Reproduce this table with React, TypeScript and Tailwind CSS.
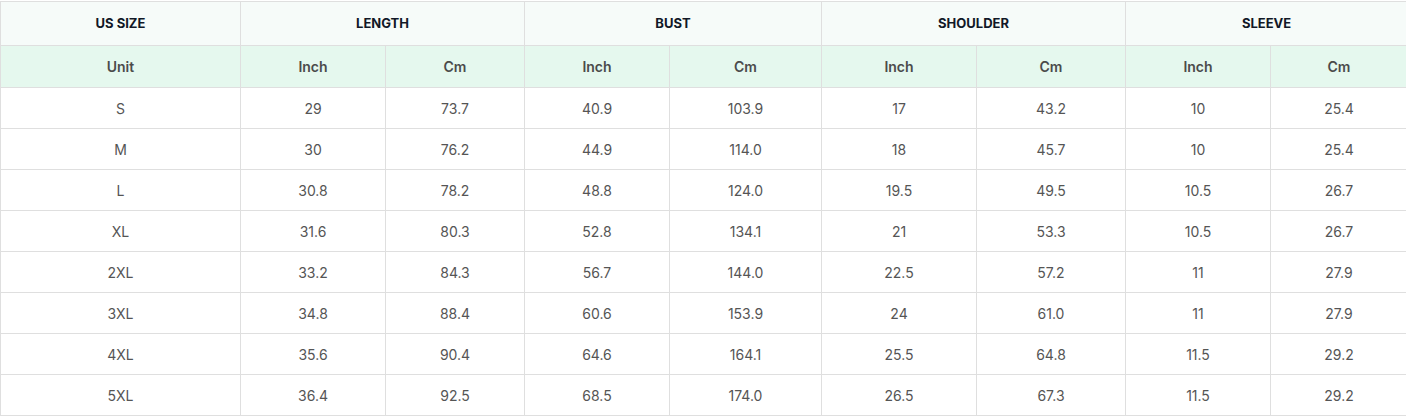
import React from "react";

const rows = [
  ["S", "29", "73.7", "40.9", "103.9", "17", "43.2", "10", "25.4"],
  ["M", "30", "76.2", "44.9", "114.0", "18", "45.7", "10", "25.4"],
  ["L", "30.8", "78.2", "48.8", "124.0", "19.5", "49.5", "10.5", "26.7"],
  ["XL", "31.6", "80.3", "52.8", "134.1", "21", "53.3", "10.5", "26.7"],
  ["2XL", "33.2", "84.3", "56.7", "144.0", "22.5", "57.2", "11", "27.9"],
  ["3XL", "34.8", "88.4", "60.6", "153.9", "24", "61.0", "11", "27.9"],
  ["4XL", "35.6", "90.4", "64.6", "164.1", "25.5", "64.8", "11.5", "29.2"],
  ["5XL", "36.4", "92.5", "68.5", "174.0", "26.5", "67.3", "11.5", "29.2"],
];

const widths = [240, 145, 139, 145, 152, 155, 149, 145, 137];

export default function App() {
  return (
    <div className="w-[1406px] overflow-hidden bg-white pt-px" style={{ fontFamily: "Inter, 'Open Sans', sans-serif" }}>
      <table className="w-[1407px] border-collapse table-fixed text-center">
        <colgroup>
          {widths.map((w, i) => (
            <col key={i} style={{ width: w }} />
          ))}
        </colgroup>
        <thead>
          <tr className="h-[44px] bg-[#f6fbf9] text-[13px] font-bold text-[#111827]">
            <th className="border border-[#dfdfdf]">US SIZE</th>
            <th colSpan={2} className="border border-[#dfdfdf]">LENGTH</th>
            <th colSpan={2} className="border border-[#dfdfdf]">BUST</th>
            <th colSpan={2} className="border border-[#dfdfdf]">SHOULDER</th>
            <th colSpan={2} className="border border-[#dfdfdf]">SLEEVE</th>
          </tr>
          <tr className="h-[42px] bg-[#e5f8ee] text-[14px] font-semibold text-[#4b4b4b]">
            <th className="border border-[#dfdfdf] font-semibold">Unit</th>
            {["Inch", "Cm", "Inch", "Cm", "Inch", "Cm", "Inch", "Cm"].map((t, i) => (
              <th key={i} className="border border-[#dfdfdf] font-semibold">{t}</th>
            ))}
          </tr>
        </thead>
        <tbody>
          {rows.map((r, ri) => (
            <tr key={ri} className="h-[41px] text-[14px] text-[#555555]">
              {r.map((c, ci) => (
                <td key={ci} className="border border-[#dfdfdf]">{c}</td>
              ))}
            </tr>
          ))}
        </tbody>
      </table>
    </div>
  );
}
